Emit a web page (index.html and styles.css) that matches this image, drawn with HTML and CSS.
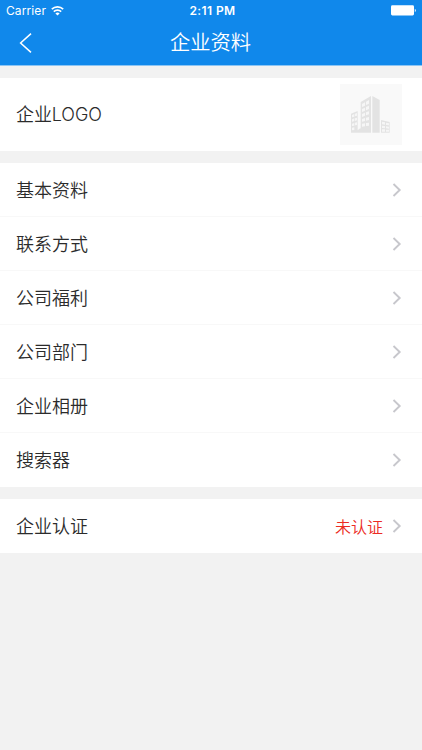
FILE: index.html
```
<!DOCTYPE html>
<html lang="zh-CN">
<head>
    <meta charset="UTF-8">
    <meta name="viewport" content="width=device-width, initial-scale=1.0">
    <title>企业资料</title>
    <link rel="stylesheet" href="styles.css">
</head>
<body>
    <header class="header">
        <div class="status-bar">
            <div class="carrier">
                <span>Carrier</span>
                <svg class="wifi" width="13" height="10" viewBox="0 0 13 10">
                    <path d="M.8 3.2a8.2 8.2 0 0 1 11.4 0M2.8 5.6a5.3 5.3 0 0 1 7.4 0" fill="none" stroke="#fff" stroke-width="1.6"/>
                    <path d="M6.5 9.6L4.4 7.5a3 3 0 0 1 4.2 0z" fill="#fff"/>
                </svg>
            </div>
            <span class="time">2:11 PM</span>
            <svg class="battery" width="26" height="11" viewBox="0 0 26 11">
                <rect x="0" y=".3" width="23" height="10.2" rx="1.4" fill="#fff"/>
                <path d="M23.8 3.7c1.4.4 1.4 3 0 3.4z" fill="#fff"/>
            </svg>
        </div>
        <div class="nav-bar">
            <svg class="back" width="14" height="22" viewBox="0 0 14 22">
                <path d="M12 1.6L1.6 11 12 20.4" fill="none" stroke="#fff" stroke-width="1.5"/>
            </svg>
            <h1 class="title">企业资料</h1>
        </div>
    </header>

    <section class="group">
        <div class="row row-logo">
            <span class="label">企业LOGO</span>
            <svg class="logo" width="62" height="61" viewBox="0 0 186 183">
                <rect width="186" height="183" fill="#f9f9f9"/>
                <g fill="#e3e3e3">
                    <path d="M33 89l20-8v58q6-6 9-6V54l31-18v110H33zM97 36l22 12v98H97zM123 108l26 6v32h-26z"/>
                </g>
                <g fill="#f6f6f6">
                    <path d="M36 93l7-3v8l-7 2zM45 89l6-2v8l-6 2zM36 106l7-3v8l-7 2zM45 103l6-2v8l-6 2zM36 119l7-2v8l-7 1zM45 116l6-1v8l-6 1zM36 131l7-1v8l-7 1z"/>
                    <path d="M66 60l9-5v10l-9 4zM78 53l9-5v11l-9 4zM66 75l9-4v9l-9 4zM78 69l9-4v10l-9 4zM66 90l9-4v9l-9 4zM78 85l9-3v9l-9 3zM66 105l9-3v9l-9 2zM78 101l9-2v9l-9 2zM66 119l9-1v9l-9 1zM78 117l9-1v9l-9 1z"/>
                    <path d="M126 113l9 2v7l-9-1zM138 116l9 2v6l-9-1zM126 125l9 1v7l-9-1zM138 127l9 1v6l-9-1zM126 136h9v7h-9zM138 137h9v6h-9z"/>
                </g>
            </svg>
        </div>
    </section>

    <section class="group">
        <div class="row">
            <span class="label">基本资料</span>
            <svg class="arrow" width="10" height="14" viewBox="0 0 10 14"><path d="M1.5 1L7.7 7l-6.2 6"/></svg>
        </div>
        <div class="row">
            <span class="label">联系方式</span>
            <svg class="arrow" width="10" height="14" viewBox="0 0 10 14"><path d="M1.5 1L7.7 7l-6.2 6"/></svg>
        </div>
        <div class="row">
            <span class="label">公司福利</span>
            <svg class="arrow" width="10" height="14" viewBox="0 0 10 14"><path d="M1.5 1L7.7 7l-6.2 6"/></svg>
        </div>
        <div class="row">
            <span class="label">公司部门</span>
            <svg class="arrow" width="10" height="14" viewBox="0 0 10 14"><path d="M1.5 1L7.7 7l-6.2 6"/></svg>
        </div>
        <div class="row">
            <span class="label">企业相册</span>
            <svg class="arrow" width="10" height="14" viewBox="0 0 10 14"><path d="M1.5 1L7.7 7l-6.2 6"/></svg>
        </div>
        <div class="row">
            <span class="label">搜索器</span>
            <svg class="arrow" width="10" height="14" viewBox="0 0 10 14"><path d="M1.5 1L7.7 7l-6.2 6"/></svg>
        </div>
    </section>

    <section class="group">
        <div class="row">
            <span class="label">企业认证</span>
            <span class="state">未认证</span>
            <svg class="arrow" width="10" height="14" viewBox="0 0 10 14"><path d="M1.5 1L7.7 7l-6.2 6"/></svg>
        </div>
    </section>
</body>
</html>
```
FILE: styles.css
```
* {
    box-sizing: border-box;
}
body {
    margin: 0;
    min-height: 100vh;
    background-color: #f2f2f2;
    color: #2b2b2b;
    font-family: Inter, 'Noto Sans CJK SC', sans-serif;
    font-weight: 350;
}
.header {
    height: 66px;
    background-color: #1088eb;
    border-bottom: 1px solid #8cc5f4;
    color: #fff;
}
.status-bar {
    display: grid;
    grid-template-columns: 1fr auto 1fr;
    align-items: center;
    height: 21px;
    padding: 0 5px 0 6px;
    font-size: 12px;
    line-height: 21px;
}
.carrier {
    display: flex;
    align-items: center;
    gap: 5px;
    font-weight: 400;
    letter-spacing: 0.1px;
}
.time {
    padding-left: 2px;
    font-weight: 600;
    letter-spacing: 0.4px;
}
.battery {
    justify-self: end;
}
.nav-bar {
    display: grid;
    grid-template-columns: 1fr auto 1fr;
    align-items: center;
    height: 44px;
    padding: 0 20px 0 19px;
}
.title {
    grid-column: 2;
    margin: 0;
    font-size: 20.3px;
    font-weight: 350;
    line-height: 44px;
}
.group {
    margin-top: 12px;
    background-color: #fff;
}
.row {
    display: flex;
    align-items: center;
    height: 54px;
    padding: 0 20px 0 16px;
    border-bottom: 1px solid #f8f8f8;
}
.row:last-child {
    border-bottom-color: #fff;
}
.row-logo {
    height: 73px;
}
.label {
    flex: 1;
    padding-top: 2px;
    font-size: 18px;
    line-height: 26px;
}
.row-logo .label {
    letter-spacing: -0.1px;
}
.state {
    margin-right: 9px;
    padding-top: 2px;
    color: #ec2b23;
    font-size: 16px;
    line-height: 24px;
}
.arrow {
    fill: none;
    stroke: #c7c7cc;
    stroke-width: 1.9;
}
```
